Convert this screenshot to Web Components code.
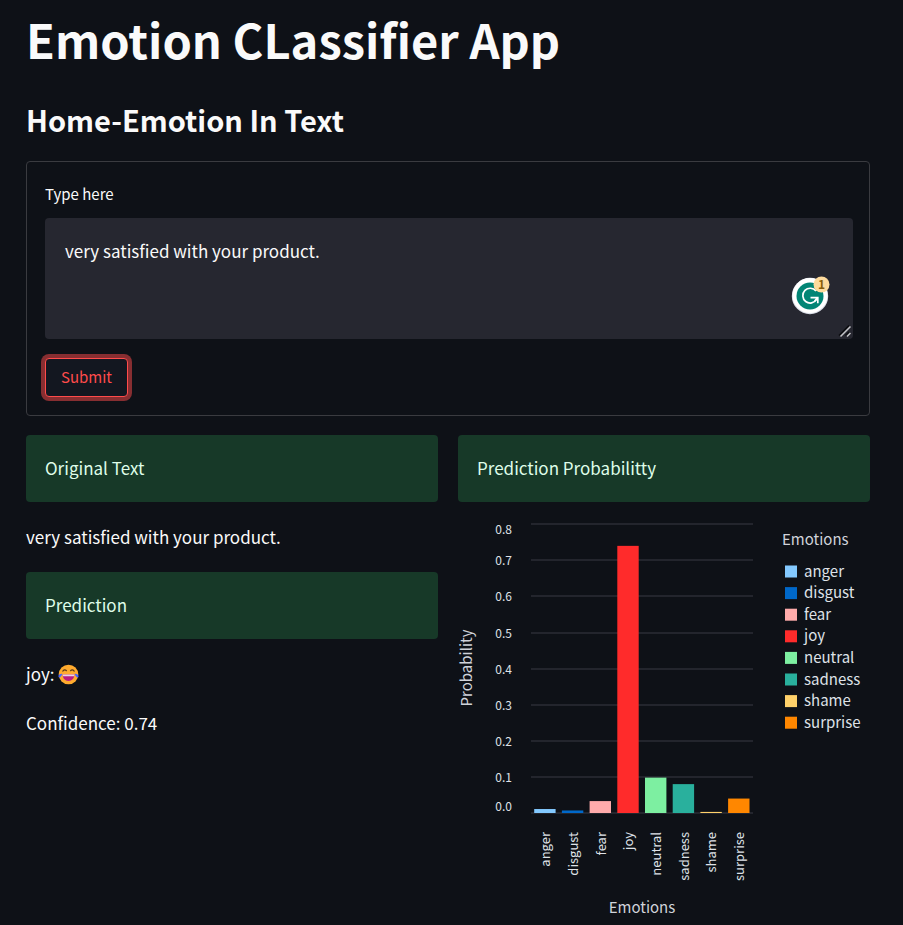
<!DOCTYPE html>
<html lang="en">
<head>
<meta charset="utf-8">
<title>Emotion Classifier App</title>
<style>
  html { background: #0e1117; color-scheme: dark; }
  body { margin: 0; color: #fafafa; font: 400 17px/28px "Noto Sans CJK SC", "Noto Sans", sans-serif; }
</style>
</head>
<body>
<emotion-app></emotion-app>

<script>
const define = (name, html, setup) => {
  const template = document.createElement('template');
  template.innerHTML = html;
  customElements.define(name, class extends HTMLElement {
    constructor() {
      super();
      this.attachShadow({ mode: 'open' }).append(template.content.cloneNode(true));
    }
    connectedCallback() { if (setup) setup(this.shadowRoot, this); }
  });
};

define('success-box', `
  <style>
    :host { display: block; padding: 19px 19px 20px; border-radius: 4px; background: #173928; color: #dffde9; }
  </style>
  <slot></slot>`);

define('result-text', `
  <style>
    :host { display: flex; align-items: center; gap: 3px; }
    ::slotted(svg) { width: 21px; height: 21px; }
  </style>
  <slot></slot>`);

define('writing-badge', `
  <style>
    :host { display: block; width: 40px; height: 40px; }
    svg { display: block; overflow: visible; }
    text { font-size: 12px; font-weight: 700; fill: #8a5e08; }
  </style>
  <svg width="40" height="40" viewBox="0 0 40 40" role="img" aria-label="1 writing suggestion">
    <circle cx="19" cy="21" r="18.2" fill="#d9dde6"/>
    <circle cx="19" cy="20.5" r="17.5" fill="#fff"/>
    <circle cx="19" cy="21" r="13.5" fill="#028575"/>
    <path d="M25 16A7.4 7.4 0 1 0 25.6 24.4" fill="none" stroke="#fff" stroke-width="1.7"/>
    <path d="M19.5 22.6H26.8V28.2M26.8 22.6L23.6 26" fill="none" stroke="#fff" stroke-width="1.7"/>
    <circle cx="30.5" cy="9.5" r="8" fill="#fedb9d"/>
    <text x="30.5" y="14" text-anchor="middle">1</text>
  </svg>`);

define('text-form', `
  <style>
    :host { display: block; }
    form { border: 1px solid #3a3b40; border-radius: 4px; padding: 18px 16px 18px 18px; }
    label { display: block; font-size: 15px; line-height: 28px; margin-bottom: 10px; }
    .field { position: relative; }
    textarea { display: block; box-sizing: border-box; width: 100%; height: 121px; margin: 0; padding: 19px 20px;
      border: 0; border-radius: 4px; background: #262730; color: #fafafa; font: inherit; resize: vertical; outline: 0; }
    textarea::-webkit-resizer { background: transparent; }
    writing-badge { position: absolute; right: 22px; bottom: 24px; }
    .grip { position: absolute; right: 1px; bottom: 1px; width: 14px; height: 14px; pointer-events: none; }
    button { display: block; margin: 19px 0 0; padding: 4px 15px 5px; border: 1px solid #ff4b4b; border-radius: 4px;
      background: #131720; color: #ff4b4b; font: inherit; font-size: 15px; box-shadow: 0 0 0 4px rgba(255,75,75,.5); }
  </style>
  <form onsubmit="return false">
    <label for="message">Type here</label>
    <div class="field">
      <textarea id="message" spellcheck="false">very satisfied with your product.</textarea>
      <writing-badge></writing-badge>
      <svg class="grip" viewBox="0 0 14 14" aria-hidden="true">
        <path d="M1 11.5L11 1.5M7.5 11.5L11 8" stroke="#0b0c0f" stroke-width="1.5"/>
        <path d="M2.5 12.5L12.5 2.5M9 12.5L12.5 9" stroke="#c4c5c8" stroke-width="1.5"/>
      </svg>
    </div>
    <button type="submit">Submit</button>
  </form>`);

define('probability-chart', `
  <style>
    :host { display: block; }
    svg { display: block; width: 100%; height: auto; overflow: visible; }
    text { fill: #dfe2e8; }
    .tick { font-size: 12px; }
    .name { font-size: 13px; }
    .title, .key { font-size: 15px; }
    .title { fill: #d0d3da; }
    line { stroke: #23252d; stroke-width: 2; }
  </style>
  <svg viewBox="0 0 412 402" role="img" aria-label="Probability of each emotion">
    <g id="grid"></g><g id="bars"></g><g id="legend"></g>
    <text class="title" text-anchor="middle" transform="translate(14 150) rotate(-90)">Probability</text>
    <text class="title" text-anchor="middle" x="184" y="395">Emotions</text>
    <text class="title" x="324" y="27">Emotions</text>
  </svg>`, root => {
  const data = [
    ['anger', .011, '#83c9ff'], ['disgust', .007, '#0068c9'], ['fear', .033, '#ffabab'], ['joy', .74, '#ff2b2b'],
    ['neutral', .098, '#7defa1'], ['sadness', .08, '#29b09d'], ['shame', .003, '#ffd16a'], ['surprise', .04, '#ff8700']
  ];
  const base = 295, unit = 361;
  let grid = '', bars = '', legend = '';
  for (let i = 0; i <= 8; i++) {
    const y = Math.round(base - i * unit / 10);
    const label = i === 8 ? y + 10 : i === 0 ? y - 2 : y + 5;
    grid += `<line x1="73" x2="295" y1="${y}" y2="${y}"/><text class="tick" x="54" y="${label}" text-anchor="end">${(i / 10).toFixed(1)}</text>`;
  }
  data.forEach(([name, value, color], i) => {
    const x = 76.2 + i * 27.7, h = value * unit;
    bars += `<rect x="${x}" y="${base - h}" width="21.4" height="${h}" fill="${color}"/>
      <text class="name" text-anchor="end" transform="translate(${x + 16} 314) rotate(-90)">${name}</text>`;
    const y = 47.5 + i * 21.6;
    legend += `<rect x="327" y="${y}" width="12" height="12" fill="${color}"/><text class="key" x="346" y="${y + 11}">${name}</text>`;
  });
  root.getElementById('grid').innerHTML = grid;
  root.getElementById('bars').innerHTML = bars;
  root.getElementById('legend').innerHTML = legend;
});

define('emotion-app', `
  <style>
    :host { display: block; padding: 7px 33px 0 26px; }
    h1, h2 { margin: 0; }
    h1 { font-size: 47px; line-height: 64px; font-weight: 700; }
    h2 { font-size: 29px; line-height: 40px; font-weight: 700; margin: 28px 0 22px; }
    .columns { display: grid; grid-template-columns: 1fr 1fr; gap: 20px; margin-top: 19px; }
    .results { display: flex; flex-direction: column; gap: 21px; }
    probability-chart { margin-top: 16px; }
  </style>
  <h1>Emotion CLassifier App</h1>
  <h2>Home-Emotion In Text</h2>
  <text-form></text-form>
  <div class="columns">
    <div class="results">
      <success-box>Original Text</success-box>
      <result-text>very satisfied with your product.</result-text>
      <success-box>Prediction</success-box>
      <result-text>joy:
        <svg viewBox="0 0 21 21" role="img" aria-label="face with tears of joy">
          <circle cx="10.5" cy="10.5" r="9.8" fill="#ffab2e"/>
          <path d="M4.5 7.5Q6.5 4.5 8.7 7M12.3 7Q14.5 4.5 16.5 7.5" fill="none" stroke="#5b3b1c" stroke-width="1.2"/>
          <path d="M4.5 10.5H16.5Q16 17 10.5 17T4.5 10.5Z" fill="#bb1d80"/>
          <path d="M4.7 10.5H16.3V12.2H4.9Z" fill="#e8d5e3"/>
          <path d="M4.3 9.8C2 9.7.2 11 .4 12.5S3 13.9 4.3 9.8ZM16.7 9.8C19 9.7 20.8 11 20.6 12.5S18 13.9 16.7 9.8Z" fill="#4464ff"/>
        </svg>
      </result-text>
      <result-text>Confidence: 0.74</result-text>
    </div>
    <div>
      <success-box>Prediction Probabilitty</success-box>
      <probability-chart></probability-chart>
    </div>
  </div>`);
</script>
</body>
</html>
